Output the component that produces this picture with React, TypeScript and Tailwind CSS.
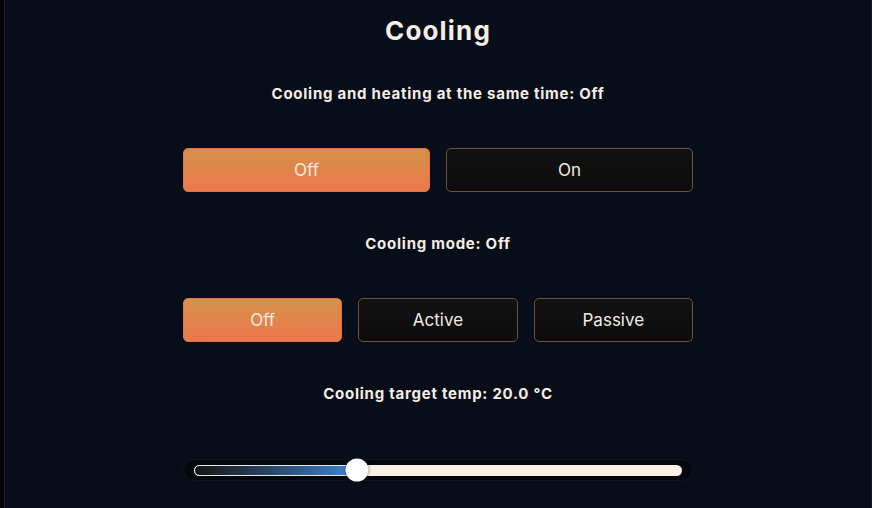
import React from 'react';

const font = { fontFamily: 'Inter, "Noto Sans", sans-serif' };

const Choice: React.FC<{ label: string; active?: boolean }> = ({ label, active }) => (
  <button
    className={`h-[44px] flex-1 rounded-[5px] border pt-px text-[17px] text-[#f3ebe1] ${
      active
        ? 'border-[#d9773f] bg-gradient-to-b from-[#d3914a] to-[#ed774c]'
        : 'border-[#6e5234] bg-gradient-to-b from-[#121212] to-[#0c0c0c]'
    }`}
  >
    {label}
  </button>
);

export default function App() {
  const pct = 33.3;

  return (
    <div className="flex h-[508px] w-[872px] bg-[#050505]" style={font}>
      <div className="w-[5px] border-r border-[#1c1c1c]" />
      <div className="flex flex-1 flex-col items-center border-r border-[#111a2a] bg-[#070d19] text-[#f6eee4]">
        <h1 className="mt-[15px] text-[26px] font-bold leading-[32px] tracking-[0.045em]">Cooling</h1>

        <p className="mt-[37px] text-[15px] font-bold leading-[20px] tracking-[0.05em]">
          Cooling and heating at the same time: Off
        </p>
        <div className="mt-[44px] flex w-[510px] gap-4">
          <Choice label="Off" active />
          <Choice label="On" />
        </div>

        <p className="mt-[42px] text-[15px] font-bold leading-[20px] tracking-[0.05em]">Cooling mode: Off</p>
        <div className="mt-[44px] flex w-[510px] gap-4">
          <Choice label="Off" active />
          <Choice label="Active" />
          <Choice label="Passive" />
        </div>

        <p className="mt-[42px] text-[15px] font-bold leading-[20px] tracking-[0.05em]">
          Cooling target temp: 20.0 °C
        </p>
        <div className="mt-[55px] flex h-[22px] w-[510px] items-center rounded-full border border-[#0e1524] bg-[#03070e] px-[10px]">
          <div className="relative h-[11px] flex-1 rounded-full bg-[#fbf1e6]">
            <div
              className="absolute left-0 top-0 h-full rounded-full border border-[#e8e8e8] bg-gradient-to-r from-[#141414] to-[#3f86d8]"
              style={{ width: `${pct}%` }}
            />
            <div
              className="absolute top-1/2 h-[23px] w-[23px] -translate-x-1/2 -translate-y-1/2 rounded-full bg-white shadow-[0_0_3px_rgba(0,0,0,0.6)]"
              style={{ left: `${pct}%` }}
            />
          </div>
        </div>
      </div>
    </div>
  );
}
